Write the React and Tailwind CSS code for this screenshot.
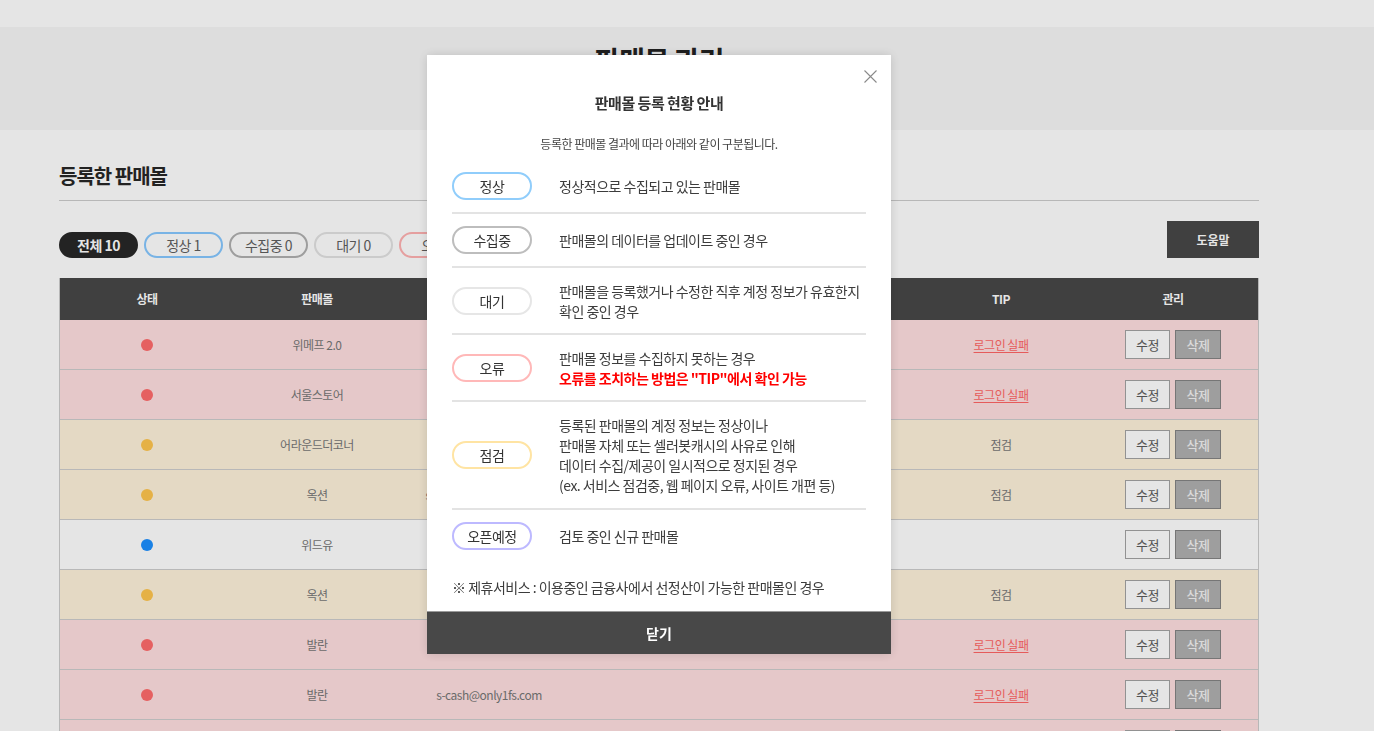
import React from 'react';

const font = { fontFamily: '"Noto Sans CJK KR", "Noto Sans", sans-serif' };

const filters = [
  { label: '전체', count: 10, cls: 'bg-[#282828] border-[#282828] text-white font-bold' },
  { label: '정상', count: 1, cls: 'border-[#86c8ff] text-[#5f5f5f]' },
  { label: '수집중', count: 0, cls: 'border-[#b0b0b0] text-[#5f5f5f]' },
  { label: '대기', count: 0, cls: 'border-[#e2e2e2] text-[#5f5f5f]' },
  { label: '오류', count: 6, cls: 'border-[#ffb2b2] text-[#5f5f5f]' },
  { label: '점검', count: 3, cls: 'border-[#ffe3a3] text-[#5f5f5f]' },
  { label: '오픈예정', count: 0, cls: 'border-[#bdb9ff] text-[#5f5f5f]' },
];

const rows = [
  { status: 'error', mall: '위메프 2.0', id: 'wmp@only1fs.com', partner: 'Y', tip: 'login' },
  { status: 'error', mall: '서울스토어', id: 'seoul@only1fs.com', partner: '', tip: 'login' },
  { status: 'check', mall: '어라운드더코너', id: 'around@only1fs.com', partner: 'Y', tip: 'check' },
  { status: 'check', mall: '옥션', id: 's-cash.auc@only1fs.com', partner: 'Y', tip: 'check' },
  { status: 'ok', mall: '위드유', id: 'withu@only1fs.com', partner: '', tip: '' },
  { status: 'check', mall: '옥션', id: 'cash-auc@only1fs.com', partner: 'Y', tip: 'check' },
  { status: 'error', mall: '발란', id: 'balaan@only1fs.com', partner: '', tip: 'login' },
  { status: 'error', mall: '발란', id: 's-cash@only1fs.com', partner: '', tip: 'login' },
  { status: 'error', mall: '무신사', id: 'musinsa@only1fs.com', partner: '', tip: 'login' },
  { status: 'error', mall: '지그재그', id: 'zigzag@only1fs.com', partner: '', tip: 'login' },
];

const rowBg = { error: 'bg-[#ffdfe0]', check: 'bg-[#fef2db]', ok: 'bg-white' };
const dotBg = { error: 'bg-[#ff6b6b]', check: 'bg-[#ffc64f]', ok: 'bg-[#1e90ff]' };

const cols = 'grid grid-cols-[174px_166px_178px_169px_169px_170px_174px]';

const guide = [
  { label: '정상', border: 'border-[#90cdfb]', pad: 'py-[12px]', lines: ['정상적으로 수집되고 있는 판매몰'] },
  { label: '수집중', border: 'border-[#bdbdbd]', pad: 'py-[12px]', lines: ['판매몰의 데이터를 업데이트 중인 경우'] },
  {
    label: '대기',
    border: 'border-[#e6e6e6]',
    pad: 'pt-[13px] pb-[12px]',
    lines: ['판매몰을 등록했거나 수정한 직후 계정 정보가 유효한지', '확인 중인 경우'],
  },
  {
    label: '오류',
    border: 'border-[#ffb8b8]',
    pad: 'pt-[13px] pb-[12px]',
    lines: ['판매몰 정보를 수집하지 못하는 경우'],
    red: '오류를 조치하는 방법은 "TIP"에서 확인 가능',
  },
  {
    label: '점검',
    border: 'border-[#ffe4a3]',
    pad: 'py-[13px]',
    lines: [
      '등록된 판매몰의 계정 정보는 정상이나',
      '판매몰 자체 또는 셀러봇캐시의 사유로 인해',
      '데이터 수집/제공이 일시적으로 정지된 경우',
      '(ex. 서비스 점검중, 웹 페이지 오류, 사이트 개편 등)',
    ],
  },
  { label: '오픈예정', border: 'border-[#bdb9ff]', pad: 'py-[12px]', lines: ['검토 중인 신규 판매몰'] },
];

function Page() {
  return (
    <div className="min-h-[731px] bg-white" style={font}>
      <div className="h-[27px] bg-white" />
      <div className="h-[103px] bg-[#f7f7f7]">
        <div className="w-[1318px] pt-[13px] text-center text-[28px] font-bold leading-[40px] tracking-[-1px] text-[#222]">
          판매몰 관리
        </div>
      </div>

      <div className="w-[1318px]">
        <div className="mx-auto w-[1200px]">
          <h2 className="mt-[32px] border-b border-[#cccccc] pb-[10px] text-[20px] font-bold leading-[28px] tracking-[-1px] text-[#262626]">
            등록한 판매몰
          </h2>

          <div className="mt-[20px] flex items-end justify-between">
            <div className="flex gap-[6px]">
              {filters.map((f) => (
                <button
                  key={f.label}
                  className={`h-[26px] w-[79px] rounded-full border-2 text-[14px] leading-[22px] tracking-[-0.5px] ${f.cls}`}
                >
                  {f.label} {f.count}
                </button>
              ))}
            </div>
            <button className="h-[37px] w-[92px] bg-[#484848] text-[12px] font-bold text-white">도움말</button>
          </div>

          <div className="mt-[20px] border-x border-[#cccccc]">
            <div className={`${cols} h-[42px] items-center bg-[#484848] text-center text-[12px] font-bold tracking-[-0.5px] text-white`}>
              <div>상태</div>
              <div>판매몰</div>
              <div>아이디</div>
              <div>제휴서비스</div>
              <div>최근 수집일</div>
              <div>TIP</div>
              <div>관리</div>
            </div>
            {rows.map((r, i) => (
              <div
                key={i}
                className={`${cols} h-[50px] items-center border-b border-[#cdcdcd] text-center text-[12px] tracking-[-0.5px] text-[#777] ${rowBg[r.status]}`}
              >
                <div className="flex justify-center">
                  <span className={`h-3 w-3 rounded-full ${dotBg[r.status]}`} />
                </div>
                <div>{r.mall}</div>
                <div>{r.id}</div>
                <div>{r.partner}</div>
                <div>{i < 7 ? '2023.06.01' : ''}</div>
                <div>
                  {r.tip === 'login' && <a className="text-[#ff6666] underline underline-offset-2">로그인 실패</a>}
                  {r.tip === 'check' && <span>점검</span>}
                </div>
                <div className="flex justify-center gap-[5px]">
                  <button className="h-[29px] w-[45px] border border-[#a3a3a3] bg-white text-[13px] text-[#5c5c5c]">수정</button>
                  <button className="h-[29px] w-[46px] border border-[#848484] bg-[#b0b0b0] text-[13px] font-medium text-[#f4f4f4]">삭제</button>
                </div>
              </div>
            ))}
          </div>
        </div>
      </div>
    </div>
  );
}

function GuideModal() {
  return (
    <div className="fixed inset-0 bg-black/10" style={font}>
      <div className="absolute left-[427px] top-[55px] w-[464px] bg-white shadow-[0_0_10px_rgba(0,0,0,0.15)]">
        <button className="absolute right-[14px] top-[15px] h-[13px] w-[13px]">
          <svg viewBox="0 0 13 13" className="h-[13px] w-[13px]" fill="none" stroke="#8a8a8a" strokeWidth="1.1">
            <path d="M0.5 0.5L12.5 12.5M12.5 0.5L0.5 12.5" />
          </svg>
        </button>

        <div className="px-[25px] pt-[37px]">
          <h3 className="text-center text-[15px] font-bold leading-[22px] tracking-[-0.5px] text-[#333]">
            판매몰 등록 현황 안내
          </h3>
          <p className="mt-[22px] text-center text-[12px] leading-[16px] tracking-[-0.5px] text-[#444]">
            등록한 판매몰 결과에 따라 아래와 같이 구분됩니다.
          </p>

          <ul className="mt-[8px]">
            {guide.map((g, i) => (
              <li
                key={g.label}
                className={`flex items-center ${i < guide.length - 1 ? 'border-b-2 border-[#e3e3e3]' : ''} ${g.pad}`}
              >
                <span
                  className={`flex h-[28px] w-[80px] shrink-0 items-center justify-center rounded-full border-2 ${g.border} text-[14px] tracking-[-0.5px] text-[#333]`}
                >
                  {g.label}
                </span>
                <div className="ml-[27px] text-[14px] leading-[20px] tracking-[-0.5px] text-[#3c3c3c]">
                  {g.lines.map((l) => (
                    <div key={l}>{l}</div>
                  ))}
                  {g.red && <div className="font-bold text-[#ff0000]">{g.red}</div>}
                </div>
              </li>
            ))}
          </ul>

          <p className="mt-[15px] pb-[14px] text-[14px] leading-[20px] tracking-[-0.5px] text-[#3c3c3c]">
            ※ 제휴서비스 : 이용중인 금융사에서 선정산이 가능한 판매몰인 경우
          </p>
        </div>

        <button className="block h-[43px] w-full border-t border-[#9a9a9a] bg-[#484848] text-[14px] font-bold text-white">
          닫기
        </button>
      </div>
    </div>
  );
}

export default function App() {
  return (
    <div className="relative">
      <Page />
      <GuideModal />
    </div>
  );
}
